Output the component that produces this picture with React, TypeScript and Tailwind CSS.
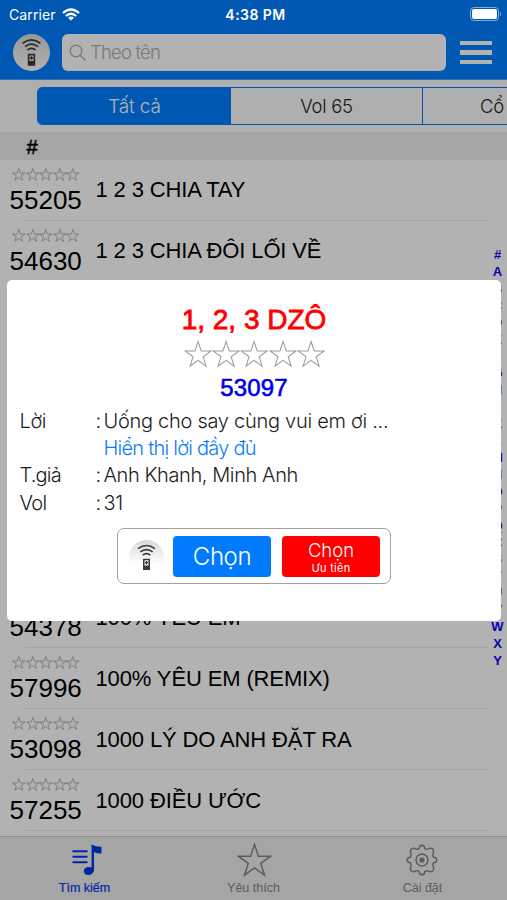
import clsx from 'clsx';

type Song = {
  code: string;
  title: string;
};

const firstSongs: Song[] = [
  { code: '55205', title: '1 2 3 CHIA TAY' },
  { code: '54630', title: '1 2 3 CHIA ĐÔI LỐI VỀ' },
];

const lastSongs: Song[] = [
  { code: '54378', title: '100% YÊU EM' },
  { code: '57996', title: '100% YÊU EM (REMIX)' },
  { code: '53098', title: '1000 LÝ DO ANH ĐẶT RA' },
  { code: '57255', title: '1000 ĐIỀU ƯỚC' },
];

const indexLetters = '#ABCDEFGHIKLMNOPQRSTUVWXY'.split('');

const STAR = 'M14 1 17.1 10.4 27 10.4 19 16.2 22 25.6 14 19.8 6 25.6 9 16.2 1 10.4 10.9 10.4Z';

const Star = ({ className, strokeWidth = 1 }: { className?: string; strokeWidth?: number }) => (
  <svg viewBox="0 0 28 27" className={className} fill="none" stroke="currentColor" strokeWidth={strokeWidth}>
    <path d={STAR} />
  </svg>
);

const Stars = ({ className, starClass, strokeWidth }: { className?: string; starClass: string; strokeWidth?: number }) => (
  <div className={clsx('flex', className)}>
    {[0, 1, 2, 3, 4].map((n) => (
      <Star key={n} className={starClass} strokeWidth={strokeWidth} />
    ))}
  </div>
);

const RemoteIcon = ({ className }: { className?: string }) => (
  <svg viewBox="0 0 37 37" className={className} fill="none" stroke="#3a3a3a" strokeWidth="1.7">
    <path d="M9.6 9.2Q18.5 2.4 27.4 9.2" />
    <path d="M12 12.6Q18.5 7.6 25 12.6" />
    <path d="M14.4 16Q18.5 12.9 22.6 16" />
    <path d="M15.6 20.6h5.8v10.4h-5.8z" strokeWidth="1.6" />
    <path d="M15.5 27h6v4h-6z" fill="#3a3a3a" stroke="none" />
    <path d="M18.5 22.2v3.6M16.7 24h3.6" strokeWidth="1.4" />
  </svg>
);

const StatusBar = () => (
  <div className="relative z-20 flex h-7 items-center justify-between pl-[9px] pr-[6px] text-white">
    <div className="flex w-[120px] items-center gap-[7px]">
      <span className="font-[Inter,sans-serif] text-[14px] tracking-[0.1px]">Carrier</span>
      <svg viewBox="0 0 18 13" className="-ml-px h-[13px] w-[18px]" fill="none" stroke="currentColor" strokeWidth="2.3">
        <path d="M1 5Q9-2 17 5" />
        <path d="M3.9 8Q9 3.6 14.1 8" />
        <path d="M9 12.6 6 9.7Q9 7.3 12 9.7Z" fill="currentColor" stroke="none" />
      </svg>
    </div>
    <span className="pl-px font-[Inter,sans-serif] text-[14px] font-semibold tracking-[0.45px]">4:38 PM</span>
    <div className="flex w-[120px] items-center justify-end gap-px">
      <div className="h-[14px] w-[29px] rounded-[4px] border border-white/50 p-px">
        <div className="h-full rounded-[2px] bg-white" />
      </div>
      <div className="h-1 w-[1.5px] rounded-r-full bg-white/50" />
    </div>
  </div>
);

const Header = () => (
  <header className="h-[79px] bg-[#007eff]">
    <StatusBar />
    <div className="flex items-center pl-[13px] pt-[6px]">
      <div className="h-[37px] w-[37px] rounded-full bg-linear-to-b from-[#d8d8d8] to-white">
        <RemoteIcon className="h-full w-full" />
      </div>
      <div className="ml-3 flex h-[37px] w-[384px] items-center rounded-[6px] bg-white pl-[7px]">
        <svg viewBox="0 0 18 18" className="h-[18px] w-[18px]" fill="none" stroke="#a9a9a9" strokeWidth="1.3">
          <circle cx="7" cy="7" r="5.8" />
          <path d="M11.3 11.3 16.6 16.6" />
        </svg>
        <span className="ml-[3px] pt-px font-[Inter,sans-serif] text-[18.5px] font-light tracking-[-0.8px] text-[#aeaeae]">Theo tên</span>
      </div>
      <div className="ml-[14px] flex w-8 flex-col gap-[5px]">
        <div className="h-[4.5px] bg-white" />
        <div className="h-[4.5px] bg-white" />
        <div className="h-[4.5px] bg-white" />
      </div>
    </div>
  </header>
);

const Segments = () => (
  <div className="h-[53px] overflow-hidden border-t border-[#4aa0ff] bg-[#fbfbfb] pl-[37px] pt-[7px]">
    <div className="flex h-[38px] w-[580px] overflow-hidden rounded-[5px] border border-[#007eff] font-[Inter,sans-serif] text-[18.5px] font-light tracking-[-0.3px] text-[#222]">
      <div className="flex w-[193px] items-center justify-center bg-[#007eff] pt-[2px] text-[19px] tracking-[-0.1px] text-white">Tất cả</div>
      <div className="flex w-[192px] items-center justify-center border-r border-[#007eff] pt-[2px]">Vol 65</div>
      <div className="flex items-center pl-[57px] pt-[2px] whitespace-nowrap">Cổ</div>
    </div>
  </div>
);

const SongRow = ({ song }: { song: Song }) => (
  <div className="relative flex h-[61.1px]">
    <div className="w-[95.5px] shrink-0 pl-[9.5px] pt-[8px]">
      <Stars className="pl-[2.5px] text-[#8c8c8c]" starClass="h-[13px] w-[13.5px]" strokeWidth={1.3} />
      <div className="mt-[4px] text-[26px] leading-[30px]">{song.code}</div>
    </div>
    <div className="pt-[16.5px] text-[22px] leading-[28px] tracking-[-0.13px] whitespace-nowrap">{song.title}</div>
    <div className="absolute bottom-0 left-[25px] right-[19px] h-px bg-[#ebebeb]" />
  </div>
);

const SongList = () => (
  <main className="h-[704px] overflow-hidden bg-white text-black">
    <div className="flex h-[27.5px] items-center bg-[#ececec] pl-[26.5px] pt-[3px] text-[20px] [-webkit-text-stroke:0.5px]">#</div>
    {firstSongs.map((song) => (
      <SongRow key={song.code} song={song} />
    ))}
    <div className="h-[305.4px]" />
    {lastSongs.map((song) => (
      <SongRow key={song.code} song={song} />
    ))}
  </main>
);

const IndexBar = () => (
  <div className="absolute right-0 top-[246px] flex w-[19px] flex-col items-center text-[13px] font-bold text-[#1400ff]">
    {indexLetters.map((letter) => (
      <span key={letter} className="h-[16.92px] leading-[17px]">{letter}</span>
    ))}
  </div>
);

const TabBar = () => (
  <nav className="grid h-16 grid-cols-3 border-t border-[#cfcfcf] bg-[#ededed] text-[12.5px] text-[#858585]">
    <div className="flex flex-col items-center pt-[7px] text-[#0036e6]">
      <svg viewBox="0 0 30 32" className="ml-1 h-8 w-[30px]" fill="currentColor">
        <path d="M0.5 6.3h15v2h-15zM0.5 11.8h15v2h-15zM0.5 17.2h15v2h-15z" />
        <path d="M19.6 0.5Q24 3 29.5 2.8V9.6Q25 9.8 22 8V26.6Q20.8 31 16.3 31 12 30.8 11.8 27.2 12.2 23 17 23 18.6 23 19.6 23.5Z" />
      </svg>
      <span className="mt-[4px] leading-4 [-webkit-text-stroke:0.2px]">Tìm kiếm</span>
    </div>
    <div className="flex flex-col items-center pt-[6px]">
      <Star className="ml-px h-[34px] w-[35px]" strokeWidth={1.2} />
      <span className="mt-[3px] leading-4">Yêu thích</span>
    </div>
    <div className="flex flex-col items-center pt-[7px]">
      <svg viewBox="0 0 32 32" className="-ml-px h-8 w-8" fill="none" stroke="currentColor" strokeWidth="1.5" strokeLinejoin="round">
        <path d="M13.2 4.4Q13.5 1.2 16 1.2T18.8 4.4Q20.4 5.6 22.2 4.9 24.8 3.6 26.8 5.2 28.4 7.2 27.1 9.8 26.4 11.6 27.6 13.2 30.8 13.5 30.8 16T27.6 18.8Q26.4 20.4 27.1 22.2 28.4 24.8 26.8 26.8 24.8 28.4 22.2 27.1 20.4 26.4 18.8 27.6 18.5 30.8 16 30.8T13.2 27.6Q11.6 26.4 9.8 27.1 7.2 28.4 5.2 26.8 3.6 24.8 4.9 22.2 5.6 20.4 4.4 18.8 1.2 18.5 1.2 16T4.4 13.2Q5.6 11.6 4.9 9.8 3.6 7.2 5.2 5.2 7.2 3.6 9.8 4.9 11.6 5.6 13.2 4.4Z" />
        <circle cx="16" cy="16" r="6" />
        <circle cx="16" cy="16" r="2.6" fill="currentColor" stroke="none" />
      </svg>
      <span className="mt-[4px] leading-4">Cài đặt</span>
    </div>
  </nav>
);

const SongDialog = () => (
  <div className="absolute left-[7px] top-[280px] z-20 flex h-[341px] w-[494px] flex-col items-center rounded-[5px] bg-white">
    <h2 className="mt-[24px] text-[28px] leading-8 text-[#ff0000] [-webkit-text-stroke:0.8px]">1, 2, 3 DZÔ</h2>
    <Stars className="mt-[4px] pl-px text-[#999]" starClass="h-[28px] w-[28.2px]" />
    <div className="mt-[5px] text-[24px] leading-[30px] tracking-[0.2px] text-[#0000e6] [-webkit-text-stroke:0.6px]">53097</div>
    <div className="mt-[5px] grid w-full grid-cols-[76px_8px_1fr] pl-[12.5px] font-[Inter,sans-serif] text-[20px] leading-[27.2px] font-light tracking-[-0.4px] whitespace-nowrap text-[#1c1c1c]">
      <span>Lời</span>
      <span>:</span>
      <span className="tracking-[-0.28px]">Uống cho say cùng vui em ơi ...</span>
      <span className="col-start-3 tracking-[-0.75px] text-[#0a7cff]">Hiển thị lời đầy đủ</span>
      <span className="tracking-[-0.8px]">T.giả</span>
      <span>:</span>
      <span>Anh Khanh, Minh Anh</span>
      <span className="tracking-[-0.7px]">Vol</span>
      <span>:</span>
      <span>31</span>
    </div>
    <div className="mt-[11.5px] flex h-[56px] w-[274px] items-center rounded-[7px] border border-[#a0a0a0] pl-[11px] font-[Inter,sans-serif] text-white">
      <div className="mt-[2px] h-[35px] w-[35px] rounded-full bg-linear-to-b from-[#d9d9d9] to-white to-70%">
        <RemoteIcon className="h-full w-full" />
      </div>
      <button className="ml-[9px] h-[41px] w-[98px] rounded-[4px] bg-[#007aff] pt-px text-[24px] font-light tracking-[-0.4px]">Chọn</button>
      <button className="ml-[11px] flex h-[41px] w-[98px] flex-col items-center rounded-[4px] bg-[#ff0000] pt-[3px]">
        <span className="text-[18.5px] leading-[22px] font-light">Chọn</span>
        <span className="text-[11px] leading-[15px] tracking-[0.3px]">Ưu tiên</span>
      </button>
    </div>
  </div>
);

export default function App() {
  return (
    <div className="relative h-[900px] w-[507px] overflow-hidden bg-white font-['Liberation_Sans',Arial,sans-serif]">
      <Header />
      <Segments />
      <SongList />
      <IndexBar />
      <TabBar />
      <div className="absolute inset-0 z-10 bg-black/30" />
      <SongDialog />
    </div>
  );
}
